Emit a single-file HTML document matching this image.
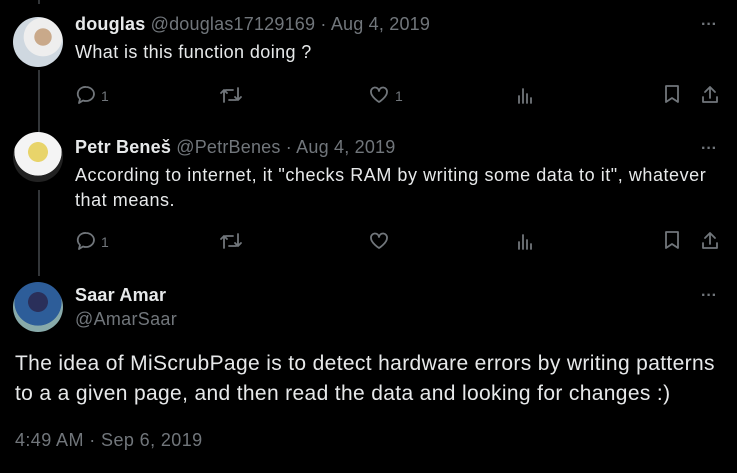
<!DOCTYPE html>
<html><head><meta charset="utf-8"><style>
body{margin:0;background:#000;width:737px;height:473px;overflow:hidden;position:relative;font-family:"Liberation Sans",sans-serif;color:#e7e9ea}
.a{position:absolute;white-space:nowrap}
.g{color:#71767b}
.b{font-weight:bold}
.line{position:absolute;left:38px;width:2px;background:#333639}
.av{position:absolute;width:50px;height:50px;border-radius:50%;left:13px}
svg{position:absolute;fill:none;stroke:#71767b;stroke-width:1.8;stroke-linecap:round;stroke-linejoin:round}
.dots{position:absolute;color:#71767b;font-size:16px;letter-spacing:0px;font-weight:bold}
.n{position:absolute;color:#71767b;font-size:14px}
</style></head><body>
<div class="line" style="top:0;height:4px"></div>
<div class="line" style="top:70px;height:62px"></div>
<div class="line" style="top:190px;height:86px"></div>

<div class="av" style="top:17px;background:radial-gradient(circle at 60% 40%,#c9a98a 0 20%,#eee 21% 45%,#cfd8e0 46%)"></div>
<div class="av" style="top:132px;background:radial-gradient(circle at 50% 40%,#e8d46a 0 25%,#f4f4f4 26% 60%,#222 61%)"></div>
<div class="av" style="top:282px;background:radial-gradient(circle at 50% 40%,#2a2f5a 0 25%,#2d5d99 26% 60%,#8aa 61%)"></div>

<div class="a" style="left:75px;top:14px;font-size:18px;letter-spacing:0.2px"><span class="b">douglas</span> <span class="g">@douglas17129169 · Aug 4, 2019</span></div>
<div class="a" style="left:75px;top:42px;font-size:18px;letter-spacing:0.4px">What is this function doing ?</div>
<div class="dots" style="left:701px;top:16px">···</div>

<div class="a" style="left:75px;top:137px;font-size:18px;letter-spacing:0.2px"><span class="b">Petr Beneš</span> <span class="g">@PetrBenes · Aug 4, 2019</span></div>
<div class="a" style="left:75px;top:165px;font-size:18px;letter-spacing:0.55px">According to internet, it "checks RAM by writing some data to it", whatever</div>
<div class="a" style="left:75px;top:190px;font-size:18px;letter-spacing:0.55px">that means.</div>
<div class="dots" style="left:701px;top:140px">···</div>

<div class="a b" style="left:75px;top:285px;font-size:18px;letter-spacing:0.2px">Saar Amar</div>
<div class="a g" style="left:75px;top:309px;font-size:18px;letter-spacing:0.3px">@AmarSaar</div>
<div class="dots" style="left:701px;top:287px">···</div>
<div class="a" style="left:15px;top:352px;font-size:21px;letter-spacing:0.35px">The idea of MiScrubPage is to detect hardware errors by writing patterns</div>
<div class="a" style="left:15px;top:382px;font-size:21px;letter-spacing:0.35px">to a a given page, and then read the data and looking for changes :)</div>
<div class="a g" style="left:15px;top:430px;font-size:18px;letter-spacing:0.4px">4:49 AM · Sep 6, 2019</div>

<svg style="left:76px;top:85px" width="20" height="20" viewBox="0 0 20 20"><path d="M10 2a8 7 0 1 1-3 13.5L3 18l1-4A7.5 7 0 0 1 10 2z"/></svg>
<div class="n" style="left:101px;top:88px">1</div>
<svg style="left:219px;top:85px" width="24" height="20" viewBox="0 0 24 20"><path d="M5 17V7a2 2 0 0 1 2-2h7M2 8l3-3 3 3M19 3v10a2 2 0 0 1-2 2h-7M16 12l3 3 3-3"/></svg>
<svg style="left:369px;top:85px" width="20" height="20" viewBox="0 0 20 20"><path d="M10 17S2 12 2 7a4 4 0 0 1 8-1 4 4 0 0 1 8 1c0 5-8 10-8 10z"/></svg>
<div class="n" style="left:395px;top:88px">1</div>
<svg style="left:515px;top:85px" width="20" height="20" viewBox="0 0 20 20"><path d="M4 18v-7M8 18V4M12 18v-9M16 18v-5"/></svg>
<svg style="left:662px;top:84px" width="20" height="20" viewBox="0 0 20 20"><path d="M4 2h12v16l-6-4-6 4z"/></svg>
<svg style="left:700px;top:84px" width="20" height="20" viewBox="0 0 20 20"><path d="M10 14V3M5 8l5-5 5 5M3 13v5h14v-5"/></svg>

<svg style="left:76px;top:231px" width="20" height="20" viewBox="0 0 20 20"><path d="M10 2a8 7 0 1 1-3 13.5L3 18l1-4A7.5 7 0 0 1 10 2z"/></svg>
<div class="n" style="left:101px;top:234px">1</div>
<svg style="left:219px;top:231px" width="24" height="20" viewBox="0 0 24 20"><path d="M5 17V7a2 2 0 0 1 2-2h7M2 8l3-3 3 3M19 3v10a2 2 0 0 1-2 2h-7M16 12l3 3 3-3"/></svg>
<svg style="left:369px;top:231px" width="20" height="20" viewBox="0 0 20 20"><path d="M10 17S2 12 2 7a4 4 0 0 1 8-1 4 4 0 0 1 8 1c0 5-8 10-8 10z"/></svg>
<svg style="left:515px;top:231px" width="20" height="20" viewBox="0 0 20 20"><path d="M4 18v-7M8 18V4M12 18v-9M16 18v-5"/></svg>
<svg style="left:662px;top:230px" width="20" height="20" viewBox="0 0 20 20"><path d="M4 2h12v16l-6-4-6 4z"/></svg>
<svg style="left:700px;top:230px" width="20" height="20" viewBox="0 0 20 20"><path d="M10 14V3M5 8l5-5 5 5M3 13v5h14v-5"/></svg>
</body></html>
